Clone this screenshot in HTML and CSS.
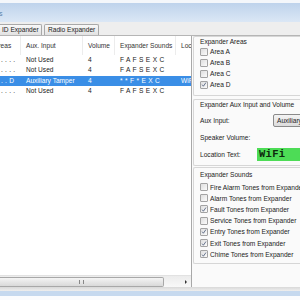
FILE: index.html
```html
<!DOCTYPE html>
<html>
<head>
<meta charset="utf-8">
<link rel="stylesheet" href="styles.css">
</head>
<body>
<div class="app">
  <div class="topgap"></div>
  <div class="banner"><span class="frag">s</span></div>
  <div class="tabstrip">
    <div class="tab tab-first">ID Expander</div>
    <div class="tab">Radio Expander</div>
  </div>
  <div class="main">
    <div class="listpane">
      <div class="list">
        <div class="lrow lhead">
          <div class="c c1"><span class="clip">Areas</span></div>
          <div class="c">Aux. Input</div>
          <div class="c">Volume</div>
          <div class="c">Expander Sounds</div>
          <div class="c">Loc</div>
        </div>
        <div class="lrow">
          <div class="c c1 dots">. . . .</div>
          <div class="c">Not Used</div>
          <div class="c">4</div>
          <div class="c snd">F A F S E X C</div>
          <div class="c"></div>
        </div>
        <div class="lrow">
          <div class="c c1 dots">. . . .</div>
          <div class="c">Not Used</div>
          <div class="c">4</div>
          <div class="c snd">F A F S E X C</div>
          <div class="c"></div>
        </div>
        <div class="lrow sel">
          <div class="c c1 dots">. . D</div>
          <div class="c">Auxiliary Tamper</div>
          <div class="c">4</div>
          <div class="c snd">* * F * E X C</div>
          <div class="c">WiF</div>
        </div>
        <div class="lrow">
          <div class="c c1 dots">. . . .</div>
          <div class="c">Not Used</div>
          <div class="c">4</div>
          <div class="c snd">F A F S E X C</div>
          <div class="c"></div>
        </div>
      </div>
      <div class="hscroll">
        <div class="thumb"><span class="grip"></span></div>
        <div class="track"></div>
        <div class="arrow"></div>
      </div>
    </div>
    <div class="side">
      <div class="group g1">
        <div class="gtitle">Expander Areas</div>
        <div class="cbrow"><span class="cb"></span>Area A</div>
        <div class="cbrow"><span class="cb"></span>Area B</div>
        <div class="cbrow"><span class="cb"></span>Area C</div>
        <div class="cbrow"><span class="cb on"><svg viewBox="0 0 8 8"><path d="M1.5 4.2 L3.2 6.3 L6.6 1.4"/></svg></span>Area D</div>
      </div>
      <div class="group g2">
        <div class="gtitle">Expander Aux Input and Volume</div>
        <div class="frow aux"><span class="flabel w-aux">Aux Input:</span><span class="combo">Auxiliary</span></div>
        <div class="frow spk"><span class="flabel">Speaker Volume:</span></div>
        <div class="frow loc"><span class="flabel w-loc">Location Text:</span><span class="lcd">WiFi</span></div>
      </div>
      <div class="group g3">
        <div class="gtitle">Expander Sounds</div>
        <div class="cbrow s"><span class="cb"></span>Fire Alarm Tones from Expander</div>
        <div class="cbrow s"><span class="cb"></span>Alarm Tones from Expander</div>
        <div class="cbrow s"><span class="cb on"><svg viewBox="0 0 8 8"><path d="M1.5 4.2 L3.2 6.3 L6.6 1.4"/></svg></span>Fault Tones from Expander</div>
        <div class="cbrow s"><span class="cb"></span>Service Tones from Expander</div>
        <div class="cbrow s"><span class="cb on"><svg viewBox="0 0 8 8"><path d="M1.5 4.2 L3.2 6.3 L6.6 1.4"/></svg></span>Entry Tones from Expander</div>
        <div class="cbrow s"><span class="cb on"><svg viewBox="0 0 8 8"><path d="M1.5 4.2 L3.2 6.3 L6.6 1.4"/></svg></span>Exit Tones from Expander</div>
        <div class="cbrow s"><span class="cb on"><svg viewBox="0 0 8 8"><path d="M1.5 4.2 L3.2 6.3 L6.6 1.4"/></svg></span>Chime Tones from Expander</div>
      </div>
    </div>
  </div>
  <div class="bottom">
    <div class="bline"></div>
    <div class="bblue"></div>
    <div class="bwhite"></div>
  </div>
</div>
</body>
</html>
```

FILE: styles.css
```css
* { box-sizing: border-box; margin: 0; padding: 0; }
body {
  width: 300px; height: 300px; overflow: hidden;
  font-family: "Liberation Sans", Arial, sans-serif;
  font-size: 6.6px; color: #222;
  background: #f0f0f0;
}
.app { display: flex; flex-direction: column; height: 300px; width: 300px; overflow: hidden; }
.topgap { height: 3px; background: #f4f7fb; }
.banner {
  height: 19px;
  background: linear-gradient(#bed3ec, #dbe7f5);
  padding-top: 7px;
}
.frag { display: block; color: #5a7fa8; font-size: 7px; line-height: 8px; margin-left: -1px; }
.tabstrip {
  height: 14px; background: #eeeeee;
  display: flex; align-items: flex-end; gap: 2px;
  border-bottom: 1px solid #b5b5b5;
}
.tab {
  height: 11px; line-height: 10px;
  border: 1px solid #a9a9a9; border-bottom: none;
  border-radius: 2px 2px 0 0;
  background: linear-gradient(#f8f8f8, #e2e2e2);
  padding: 0 3px; color: #222; white-space: nowrap;
}
.tab-first { width: 42px; border-left: none; padding-left: 2px; border-radius: 0 2px 0 0; }
.main { display: flex; height: 251px; }
.listpane {
  width: 192px; display: flex; flex-direction: column;
  border-right: 1px solid #a8a8a8; background: #fff;
}
.list { flex: 1; background: #fff; overflow: hidden; }
.lrow {
  display: grid;
  grid-template-columns: 21px 62px 32px 61px 15px;
  height: 10.3px; line-height: 10.3px;
  white-space: nowrap;
}
.lrow .c { padding-left: 5px; overflow: hidden; }
.lrow .c1 { padding-left: 0; }
.lhead { height: 19px; line-height: 19px; color: #333; }
.lhead .c { border-right: 1px solid #ececec; }
.lhead .c:last-child { border-right: none; }
.clip { display: inline-block; margin-left: -6px; }
.dots { padding-left: 1px !important; letter-spacing: 0.2px; }
.snd { letter-spacing: 0.3px; }
.sel { background: #3a8ee6; color: #fff; }
.hscroll {
  height: 12px; display: flex; align-items: center;
  background: linear-gradient(#ececec, #f8f8f8);
  border-top: 1px solid #e2e2e2;
}
.thumb {
  width: 164px; height: 10px;
  border: 1px solid #a8a8a8; border-left: none; border-radius: 0 2px 2px 0;
  background: linear-gradient(#f4f4f4, #d9d9d9);
  display: flex; justify-content: center; align-items: center;
}
.grip { width: 5px; height: 4px; border-left: 1px solid #888; border-right: 1px solid #888; }
.track { flex: 1; }
.arrow {
  width: 0; height: 0; margin-right: 4px;
  border-top: 2px solid transparent; border-bottom: 2px solid transparent;
  border-left: 2px solid #333;
}
.side {
  flex: 1; background: #fafafa;
  padding-left: 1px;
}
.group {
  border: 1px solid #d6d6d6; border-right: none;
  border-radius: 2px 0 0 2px;
  padding-left: 6px;
  white-space: nowrap; color: #222;
}
.gtitle { height: 9px; line-height: 9px; }
.g1 { margin-top: 0; padding-bottom: 3px; height: 60px; }
.g1 .cbrow:first-of-type { margin-top: 1px; }
.g2 { margin-top: 3px; height: 67px; }
.g3 { margin-top: 1px; padding-top: 2px; height: 97px; }
.cbrow { display: flex; align-items: center; height: 11px; }
.cbrow.s { height: 11.2px; }
.g3 .gtitle { margin-bottom: 2.5px; }
.cb {
  width: 8px; height: 8px; margin-right: 2px; flex: none;
  border: 1px solid #a3a3a3; border-radius: 1px;
  background: linear-gradient(135deg, #dedede, #fbfbfb);
  display: flex; align-items: center; justify-content: center;
}
.cb svg { width: 7px; height: 7px; }
.cb path { fill: none; stroke: #4a5a78; stroke-width: 1.1; }
.frow { display: flex; align-items: center; }
.aux { height: 13px; margin-top: 5px; }
.spk { height: 12px; margin-top: 4px; }
.loc { height: 13px; margin-top: 5px; }
.w-aux { width: 73px; }
.w-loc { width: 57px; }
.combo {
  height: 13px; line-height: 12px; padding-left: 3px;
  border: 1px solid #8a8a8a; border-radius: 2px;
  background: linear-gradient(#f4f4f4, #dcdcdc);
  flex: 1; overflow: hidden;
}
.lcd {
  flex: 1; height: 13px; line-height: 13px;
  background: #4ddc56; color: #0d2a0d;
  font-family: "Liberation Mono", "DejaVu Sans Mono", monospace;
  font-size: 10.5px; font-weight: bold; padding-left: 2px;
  letter-spacing: 0.3px;
}
.bottom { flex: 1; display: flex; flex-direction: column; }
.bline { height: 4px; background: linear-gradient(#d8d8d8, #eeeeee); }
.bblue { height: 5px; background: #c6d9ef; }
.bwhite { flex: 1; background: #fbfcfe; }
```
